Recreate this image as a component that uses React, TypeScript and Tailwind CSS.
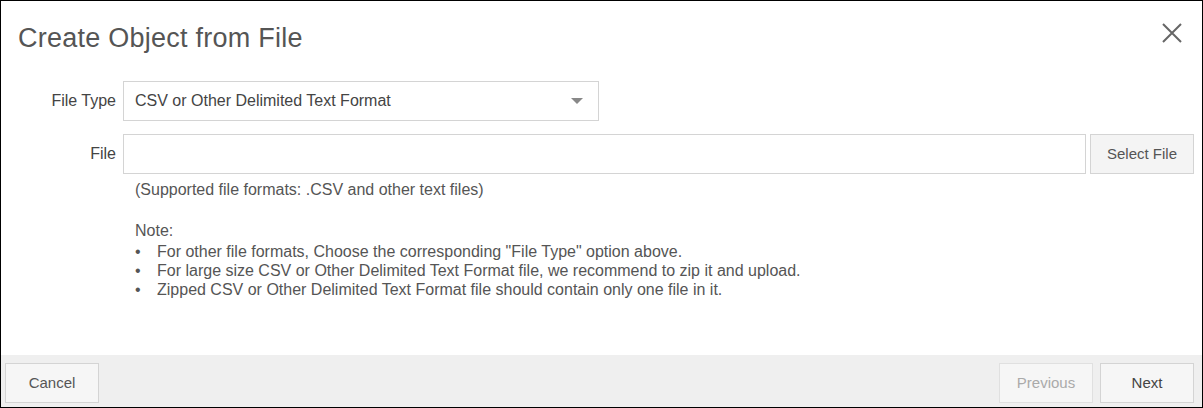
import React from "react";

export default function App() {
  return (
    <div
      className="w-[1203px] h-[408px] border border-black bg-white flex flex-col text-[#555]"
      style={{ fontFamily: '"Liberation Sans", Arial, sans-serif' }}
    >
      <div className="flex-1 flex flex-col">
        <div className="flex items-start justify-between pt-[22px] pl-[17px] pr-[20px]">
          <h1 className="text-[27px] leading-[30px] tracking-[0.25px] text-[#555]">Create Object from File</h1>
          <button className="w-[20px] h-[20px] text-[#666]" aria-label="Close">
            <svg viewBox="0 0 20 20" width="20" height="20" fill="none" stroke="currentColor" strokeWidth="2">
              <path d="M1 1 L19 19 M19 1 L1 19" />
            </svg>
          </button>
        </div>

        <div className="mt-[28px] flex flex-col gap-[13px] pr-[8px]">
          <div className="flex items-center">
            <div className="w-[115px] text-right text-[16px] text-[#444]">File Type</div>
            <div className="ml-[7px] w-[476px] h-[40px] border border-[#d4d4d4] flex items-center justify-between pl-[11px] pr-[15px] text-[16px] text-[#444]">
              <span>CSV or Other Delimited Text Format</span>
              <svg width="12" height="6" viewBox="0 0 12 6">
                <path d="M0 0 L12 0 L6 6 Z" fill="#888" />
              </svg>
            </div>
          </div>
          <div className="flex items-center">
            <div className="w-[115px] text-right text-[16px] text-[#444]">File</div>
            <div className="ml-[7px] flex-1 h-[40px] border border-[#d4d4d4]" />
            <button className="ml-[4px] w-[104px] h-[40px] border border-[#d4d4d4] bg-[#f4f4f4] text-[15px] text-[#555]">
              Select File
            </button>
          </div>
        </div>

        <div className="ml-[134px] mt-[6px] text-[16px] leading-[19px] text-[#555]">
          <div>(Supported file formats: .CSV and other text files)</div>
          <div className="mt-[22px]">Note:</div>
          <ul className="mt-[2px]">
            <li className="flex">
              <span className="w-[22px]">•</span>
              <span>For other file formats, Choose the corresponding "File Type" option above.</span>
            </li>
            <li className="flex">
              <span className="w-[22px]">•</span>
              <span>For large size CSV or Other Delimited Text Format file, we recommend to zip it and upload.</span>
            </li>
            <li className="flex">
              <span className="w-[22px]">•</span>
              <span>Zipped CSV or Other Delimited Text Format file should contain only one file in it.</span>
            </li>
          </ul>
        </div>
      </div>

      <div className="h-[52px] bg-[#efefef] flex items-start justify-between pl-[4px] pr-[8px] pt-[8px]">
        <button className="w-[94px] h-[40px] border border-[#d4d4d4] bg-[#f6f6f6] text-[15px] text-[#555]">
          Cancel
        </button>
        <div className="flex gap-[7px]">
          <button className="w-[94px] h-[40px] border border-[#e0e0e0] bg-[#f6f6f6] text-[15px] text-[#aaa]">
            Previous
          </button>
          <button className="w-[94px] h-[40px] border border-[#d4d4d4] bg-[#f6f6f6] text-[15px] text-[#444]">
            Next
          </button>
        </div>
      </div>
    </div>
  );
}
